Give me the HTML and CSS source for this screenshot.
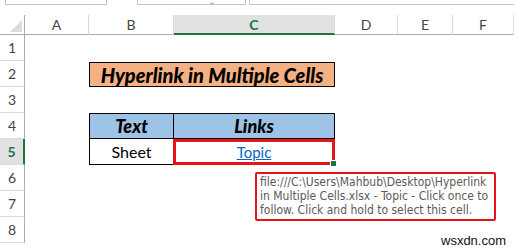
FILE: index.html
```html
<!DOCTYPE html>
<html>
<head>
  <meta charset="UTF-8">
  <link rel="stylesheet" href="styles.css">
</head>
<body>
  <!-- formula bar remnants -->
  <div class="topbar">
    <div class="tbox namebox"></div>
    <div class="tbox fxbox"><span class="fx"></span></div>
    <div class="tbox formula"></div>
  </div>

  <div class="sheet">
    <!-- column headers -->
    <div class="colhdr corner"><span class="tri"></span></div>
    <div class="colhdr">A</div>
    <div class="colhdr">B</div>
    <div class="colhdr active">C</div>
    <div class="colhdr">D</div>
    <div class="colhdr">E</div>
    <div class="colhdr">F</div>

    <!-- row headers -->
    <div class="rowhdr r1">1</div>
    <div class="rowhdr r2">2</div>
    <div class="rowhdr r3">3</div>
    <div class="rowhdr r4">4</div>
    <div class="rowhdr r5 active">5</div>
    <div class="rowhdr r6">6</div>
    <div class="rowhdr r7">7</div>
    <div class="rowhdr r8">8</div>

    <!-- title -->
    <div class="title">Hyperlink in Multiple Cells</div>

    <!-- table -->
    <div class="th th-text">Text</div>
    <div class="th th-links">Links</div>
    <div class="td td-text">Sheet</div>
    <div class="td td-link selected"><a href="#">Topic</a><span class="handle"></span></div>
  </div>

  <div class="tooltip">file:///C:\Users\Mahbub\Desktop\Hyperlink in Multiple Cells.xlsx - Topic - Click once to follow. Click and hold to select this cell.</div>
  <div class="mark">wsxdn.com</div>
</body>
</html>
```

FILE: styles.css
```css
body { margin: 0; background: #fff; font-family: Lato, "Liberation Sans", sans-serif; width: 514px; height: 251px; overflow: hidden; position: relative; }

.topbar { display: flex; height: 15px; }
.tbox { height: 4px; border: 1px solid #c6c6c6; border-top: none; background: #fff; }
.namebox { margin-left: 5px; width: 100px; }
.fxbox { margin-left: 30px; width: 107px; position: relative; }
.fx { position: absolute; left: 72px; top: 0; width: 4px; height: 3px; border-bottom: 1px solid #999; border-radius: 0 0 3px 3px; }
.formula { margin-left: 3px; flex: 1; border-right: none; }

.sheet { display: grid; grid-template-columns: 25px 64px 85px 161px 63px 55px 1fr; grid-template-rows: 20px repeat(8, 26px); }

.colhdr { border-bottom: 1px solid #ababab; border-right: 1px solid #dadada; font-size: 14px; color: #444; display: flex; align-items: center; justify-content: center; box-sizing: border-box; }
.colhdr.corner { border-right: 1px solid #ababab; position: relative; }
.tri { position: absolute; left: 10px; top: 5px; width: 0; height: 0; border-left: 12px solid transparent; border-bottom: 12px solid #dcdcdc; }
.colhdr.active { background: #e1e1e1; color: #217346; font-weight: bold; border-bottom: 2px solid #217346; }

.rowhdr { grid-column: 1; border-right: 1px solid #ababab; border-bottom: 1px solid #dadada; font-size: 14px; color: #444; display: flex; align-items: center; justify-content: center; box-sizing: border-box; }
.rowhdr.r1 { grid-row: 2; }
.rowhdr.r2 { grid-row: 3; }
.rowhdr.r3 { grid-row: 4; }
.rowhdr.r4 { grid-row: 5; }
.rowhdr.r5 { grid-row: 6; }
.rowhdr.r6 { grid-row: 7; }
.rowhdr.r7 { grid-row: 8; }
.rowhdr.r8 { grid-row: 9; }
.rowhdr.active { background: #e1e1e1; color: #217346; font-weight: bold; border-right: 2px solid #217346; }

.title { grid-row: 3; grid-column: 3 / 5; background: #f4b183; border: 1px solid #000; font-weight: 900; font-style: italic; font-size: 20px; display: flex; align-items: center; justify-content: center; box-sizing: border-box; margin-top: 1px; }

.th, .td { border: 1px solid #000; display: flex; align-items: center; justify-content: center; box-sizing: border-box; font-size: 17px; }
.th { background: #9dc3e6; font-weight: 900; font-style: italic; grid-row: 5; font-size: 18px; }
.td { grid-row: 6; font-size: 16px; border-top: none; }
.th-text, .td-text { grid-column: 3; }
.th-links, .td-link { grid-column: 4; border-left: none; }
.td-link a { color: #0563c1; font-size: 15px; }
.selected { border: 3px solid #e3141b; position: relative; margin-left: -1px; }
.handle { position: absolute; right: -5px; bottom: -5px; width: 5px; height: 5px; background: #217346; border: 1px solid #fff; }

.tooltip { position: absolute; left: 255px; top: 172px; width: 241px; height: 49px; box-sizing: border-box; border: 2px solid #e3141b; border-radius: 2px; padding: 1px 0 0 3px; font-family: "DejaVu Sans Condensed", "DejaVu Sans", sans-serif; font-size: 12px; line-height: 14px; color: #5a5a5a; background: #fff; }
.mark { position: absolute; left: 441px; top: 233px; font-family: "Liberation Sans", sans-serif; font-size: 13px; color: #111; }
```
